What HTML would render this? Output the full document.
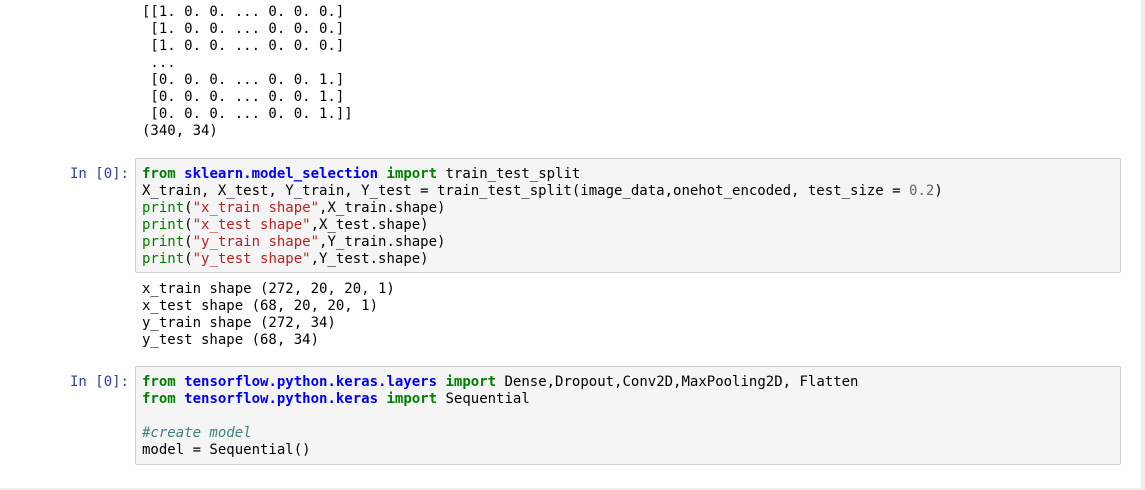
<!DOCTYPE html>
<html><head><style>
html,body{margin:0;padding:0;}
body{width:1145px;height:490px;background:#eee;position:relative;overflow:hidden;font-family:"DejaVu Sans Mono","Liberation Mono",monospace;font-size:14px;}
.page{position:absolute;left:0;top:0;width:1141px;height:488px;background:#fff;}
.ln{position:absolute;left:142px;white-space:pre;line-height:17px;color:#000;}
.box{position:absolute;left:135px;width:984px;background:#f5f5f5;border:1px solid #cfcfcf;border-radius:2px;}
.pr{position:absolute;right:1012px;color:#303f9f;white-space:pre;line-height:17px;}
.k{color:#008000;font-weight:bold}.m{color:#0000ff;font-weight:bold}.s{color:#ba2121}.b{color:#008000}.n{color:#666}.c{color:#408080;font-style:italic}
</style></head><body><div class="page">
<div class="ln" style="top:4px">[[1. 0. 0. ... 0. 0. 0.]
 [1. 0. 0. ... 0. 0. 0.]
 [1. 0. 0. ... 0. 0. 0.]
 ...
 [0. 0. 0. ... 0. 0. 1.]
 [0. 0. 0. ... 0. 0. 1.]
 [0. 0. 0. ... 0. 0. 1.]]
(340, 34)</div>
<div class="box" style="top:158px;height:113px"></div>
<div class="pr" style="top:166px">In [0]:</div>
<div class="ln" style="top:166px"><span class="k">from</span> <span class="m">sklearn.model_selection</span> <span class="k">import</span> train_test_split
X_train, X_test, Y_train, Y_test = train_test_split(image_data,onehot_encoded, test_size = <span class="n">0.2</span>)
<span class="b">print</span>(<span class="s">"x_train shape"</span>,X_train.shape)
<span class="b">print</span>(<span class="s">"x_test shape"</span>,X_test.shape)
<span class="b">print</span>(<span class="s">"y_train shape"</span>,Y_train.shape)
<span class="b">print</span>(<span class="s">"y_test shape"</span>,Y_test.shape)</div>
<div class="ln" style="top:281px">x_train shape (272, 20, 20, 1)
x_test shape (68, 20, 20, 1)
y_train shape (272, 34)
y_test shape (68, 34)</div>
<div class="box" style="top:366px;height:97px"></div>
<div class="pr" style="top:374px">In [0]:</div>
<div class="ln" style="top:374px"><span class="k">from</span> <span class="m">tensorflow.python.keras.layers</span> <span class="k">import</span> Dense,Dropout,Conv2D,MaxPooling2D, Flatten
<span class="k">from</span> <span class="m">tensorflow.python.keras</span> <span class="k">import</span> Sequential

<span class="c">#create model</span>
model = Sequential()</div>
</div></body></html>
